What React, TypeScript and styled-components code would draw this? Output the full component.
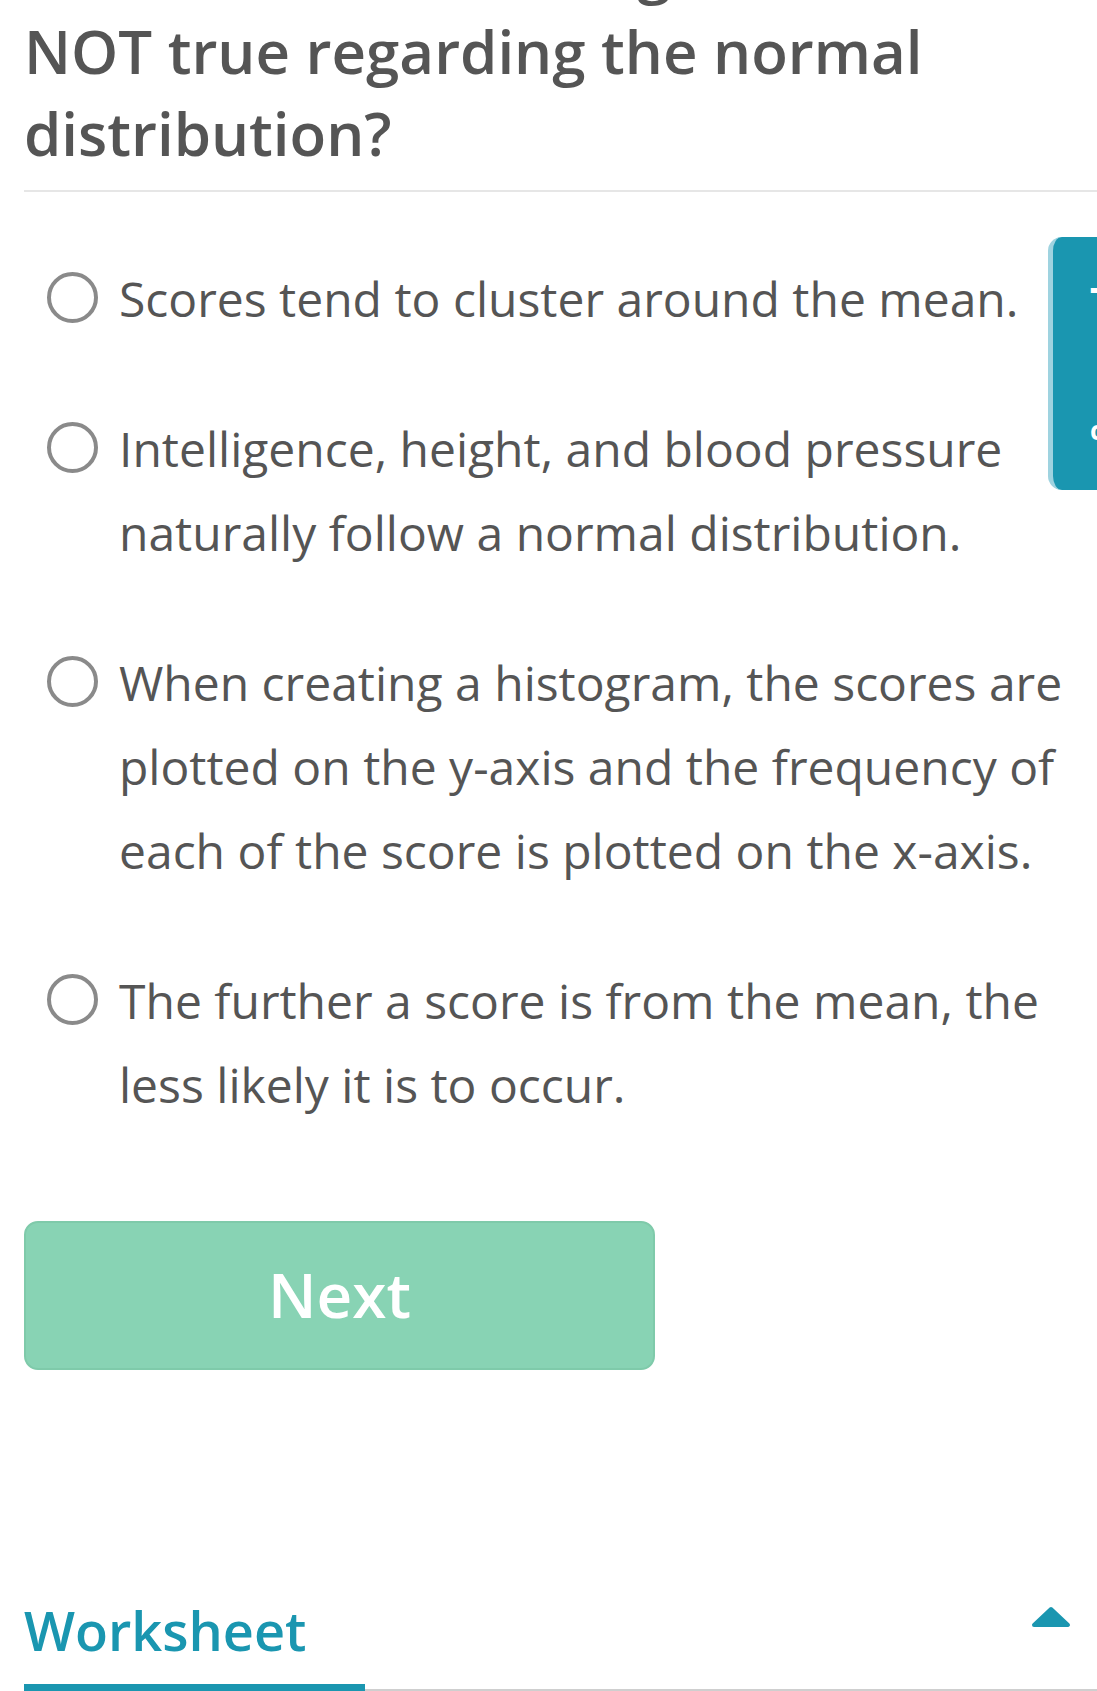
import React from "react";
import styled, { createGlobalStyle } from "styled-components";

const GlobalStyle = createGlobalStyle`
  html, body {
    margin: 0;
    padding: 0;
    background: #ffffff;
    overflow: hidden;
  }
  body {
    font-family: "Open Sans", "Noto Sans", "Liberation Sans", sans-serif;
    color: #555555;
  }
`;

const Page = styled.div`
  position: relative;
  height: 1691px;
  overflow: hidden;
  display: flex;
  flex-direction: column;
  padding-left: 24px;
  box-sizing: border-box;
`;

const Question = styled.h1`
  margin: -72px 0 0 0;
  font-size: 60px;
  line-height: 82px;
  font-weight: 600;
  color: #555555;
  letter-spacing: 0;
`;

const Divider = styled.hr`
  margin: 16px 0 0 0;
  border: none;
  height: 2px;
  background: #e6e6e6;
`;

const OptionList = styled.div`
  display: flex;
  flex-direction: column;
  gap: 66px;
  margin-top: 65px;
`;

const OptionRow = styled.label`
  display: flex;
  align-items: flex-start;
  gap: 21px;
  margin-left: 23px;
  cursor: pointer;
`;

const Radio = styled.span`
  flex: 0 0 auto;
  width: 51px;
  height: 51px;
  box-sizing: border-box;
  border: 4px solid #8a8a8a;
  border-radius: 50%;
  margin-top: 15px;
`;

const OptionText = styled.span`
  font-size: 48px;
  line-height: 84px;
  font-weight: 400;
  color: #555555;
`;

const NextButton = styled.button`
  margin-top: 94px;
  width: 631px;
  height: 149px;
  box-sizing: border-box;
  background: #88d3b4;
  border: 2px solid #7fcaaa;
  border-radius: 14px;
  color: #ffffff;
  font-family: "Open Sans", "Noto Sans", sans-serif;
  font-size: 62px;
  font-weight: 600;
  display: flex;
  align-items: center;
  justify-content: center;
  padding: 0 0 4px 0;
`;

const Spacer = styled.div`
  flex: 1 1 auto;
`;

const WorksheetBar = styled.div`
  display: flex;
  align-items: flex-start;
  justify-content: space-between;
  border-bottom: 2px solid #cfcfcf;
`;

const WorksheetTab = styled.div`
  width: 341px;
  font-size: 54px;
  line-height: 74px;
  font-weight: 600;
  color: #1a96b0;
  padding-bottom: 17px;
  border-bottom: 7px solid #1a96b0;
  margin-bottom: -2px;
`;

const Toggle = styled.span`
  display: flex;
  margin: 13px 26px 0 0;
`;

const SideCard = styled.div`
  position: absolute;
  top: 237px;
  left: 1048px;
  width: 120px;
  height: 253px;
  box-sizing: border-box;
  background: #1a96b0;
  border-left: 5px solid #9fd3e0;
  border-radius: 14px;
  display: flex;
  flex-direction: column;
  padding: 44px 0 0 37px;
  color: #ffffff;
  font-weight: 700;
`;

const CardGlyph = styled.span<{ $size: number; $gap: number }>`
  font-size: ${(p) => p.$size}px;
  line-height: 1;
  margin-top: ${(p) => p.$gap}px;
`;

const options = [
  "Scores tend to cluster around the mean.",
  "Intelligence, height, and blood pressure naturally follow a normal distribution.",
  "When creating a histogram, the scores are plotted on the y-axis and the frequency of each of the score is plotted on the x-axis.",
  "The further a score is from the mean, the less likely it is to occur.",
];

export default function App() {
  return (
    <>
      <GlobalStyle />
      <Page>
        <Question>
          Which of the following is
          <br />
          NOT true regarding the normal distribution?
        </Question>
        <Divider />
        <OptionList>
          {options.map((o) => (
            <OptionRow key={o}>
              <Radio />
              <OptionText>{o}</OptionText>
            </OptionRow>
          ))}
        </OptionList>
        <NextButton>Next</NextButton>
        <Spacer />
        <WorksheetBar>
          <WorksheetTab>Worksheet</WorksheetTab>
          <Toggle>
            <svg width="40" height="22" viewBox="0 0 40 22">
              <path
                d="M20 3 L37 19 L3 19 Z"
                fill="#1a96b0"
                stroke="#1a96b0"
                strokeWidth="4"
                strokeLinejoin="round"
              />
            </svg>
          </Toggle>
        </WorksheetBar>
        <SideCard>
          <CardGlyph $size={40} $gap={0}>T</CardGlyph>
          <CardGlyph $size={26} $gap={96}>c</CardGlyph>
        </SideCard>
      </Page>
    </>
  );
}
